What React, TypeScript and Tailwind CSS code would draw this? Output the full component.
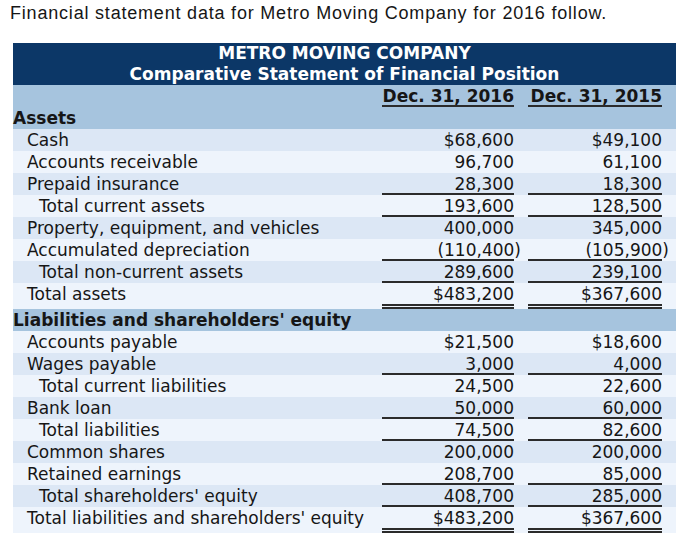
type Line = 'none' | 'single' | 'double';

type Row = {
  label: string;
  indent?: 0 | 1 | 2;
  section?: boolean;
  v1?: string;
  v2?: string;
  line?: Line;
};

const rows: Row[] = [
  { label: 'Cash', indent: 1, v1: '$68,600', v2: '$49,100' },
  { label: 'Accounts receivable', indent: 1, v1: '96,700', v2: '61,100' },
  { label: 'Prepaid insurance', indent: 1, v1: '28,300', v2: '18,300', line: 'single' },
  { label: 'Total current assets', indent: 2, v1: '193,600', v2: '128,500', line: 'single' },
  { label: 'Property, equipment, and vehicles', indent: 1, v1: '400,000', v2: '345,000' },
  { label: 'Accumulated depreciation', indent: 1, v1: '(110,400)', v2: '(105,900)', line: 'single' },
  { label: 'Total non-current assets', indent: 2, v1: '289,600', v2: '239,100', line: 'single' },
  { label: 'Total assets', indent: 1, v1: '$483,200', v2: '$367,600', line: 'double' },
  { label: "Liabilities and shareholders' equity", section: true },
  { label: 'Accounts payable', indent: 1, v1: '$21,500', v2: '$18,600' },
  { label: 'Wages payable', indent: 1, v1: '3,000', v2: '4,000', line: 'single' },
  { label: 'Total current liabilities', indent: 2, v1: '24,500', v2: '22,600' },
  { label: 'Bank loan', indent: 1, v1: '50,000', v2: '60,000', line: 'single' },
  { label: 'Total liabilities', indent: 2, v1: '74,500', v2: '82,600', line: 'single' },
  { label: 'Common shares', indent: 1, v1: '200,000', v2: '200,000' },
  { label: 'Retained earnings', indent: 1, v1: '208,700', v2: '85,000', line: 'single' },
  { label: "Total shareholders' equity", indent: 2, v1: '408,700', v2: '285,000', line: 'single' },
  { label: "Total liabilities and shareholders' equity", indent: 1, v1: '$483,200', v2: '$367,600', line: 'double' },
];

const lineClass = (line: Line) => {
  if (line === 'single') return 'border-b-2 border-[#2b2b2b]';
  if (line === 'double') return 'border-b-[5px] border-double border-[#2b2b2b]';
  return '';
};

const Amount = ({ value }: { value?: string }) => {
  if (!value) return null;
  if (value.startsWith('(')) {
    return (
      <span>
        {value.slice(0, -1)}
        <span className="-mr-[7px]">)</span>
      </span>
    );
  }
  return <span>{value}</span>;
};

const indentClass = ['pl-0', 'pl-[14px]', 'pl-[26px]'];

export default function App() {
  return (
    <div className="w-[700px] h-[552px] bg-white text-[#161616]">
      {/* Intro line */}
      <div className="h-[43px] pl-[10px] pt-[1px] font-['Liberation_Sans',Arial,sans-serif] text-[18px] leading-[24px] tracking-[0.8px]">
        Financial statement data for Metro Moving Company for 2016 follow.
      </div>

      <div className="ml-[13px] w-[663px] font-['DejaVu_Sans',Verdana,sans-serif] text-[17px] leading-[22px]">
        {/* Title band */}
        <div className="h-[42px] bg-[#0c3767] text-white font-bold text-center leading-[21px]">
          <div>METRO MOVING COMPANY</div>
          <div>Comparative Statement of Financial Position</div>
        </div>

        {/* Column headers */}
        <div className="bg-[#a6c4de]">
          <div className="flex h-[22px] font-bold">
            <div className="flex-1" />
            <div className="w-[132px] text-right border-b-2 border-[#2b2b2b]">Dec. 31, 2016</div>
            <div className="w-[14px]" />
            <div className="w-[134px] text-right border-b-2 border-[#2b2b2b]">Dec. 31, 2015</div>
            <div className="w-[14px]" />
          </div>
          <div className="h-[22px] font-bold">Assets</div>
        </div>

        {rows.map((row, i) => {
          if (row.section) {
            return (
              <div key={row.label} className="h-[22px] bg-[#a6c4de] font-bold whitespace-nowrap">
                {row.label}
              </div>
            );
          }
          const bg = i % 2 === 0 ? 'bg-[#dce7f5]' : 'bg-[#eef4fc]';
          const line = row.line ?? 'none';
          const height = line === 'double' ? 'h-[26px]' : 'h-[22px]';
          return (
            <div key={row.label} className={`flex ${height} ${bg}`}>
              <div className={`flex-1 whitespace-nowrap ${indentClass[row.indent ?? 0]}`}>{row.label}</div>
              <div className={`w-[132px] text-right ${lineClass(line)}`}>
                <Amount value={row.v1} />
              </div>
              <div className="w-[14px]" />
              <div className={`w-[134px] text-right ${lineClass(line)}`}>
                <Amount value={row.v2} />
              </div>
              <div className="w-[14px]" />
            </div>
          );
        })}
      </div>
    </div>
  );
}
